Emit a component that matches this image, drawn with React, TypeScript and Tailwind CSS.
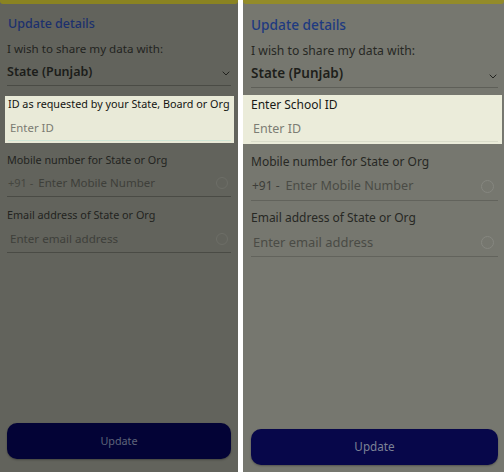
import React from 'react';

type PanelStyle = {
  panel: string;
  bar: string;
  title: string;
  share: string;
  stateRow: string;
  stateText: string;
  chevron: string;
  box: string;
  boxLabel: string;
  boxInput: string;
  label1: string;
  mobileRow: string;
  label2: string;
  emailRow: string;
  mobileText: string;
  emailText: string;
  prefix: string;
  circle: string;
  button: string;
};

const left: PanelStyle = {
  panel: 'w-[238px] bg-[#62635c] px-[7px] pb-[13px]',
  bar: 'h-[4px] -mx-[7px] bg-[#8a8322] rounded-b-[3px]',
  title: 'mt-[10px] pl-[1px] text-[12.5px] leading-[20px] font-medium text-[#1b306d]',
  share: 'mt-[7px] text-[11.6px] leading-[16px] text-[#22231f]',
  stateRow: 'mt-[5px] pb-[3px] border-b border-[#4a4b45]',
  stateText: 'text-[12.5px] leading-[20px] font-semibold text-[#1c1d1a]',
  chevron: 'mr-[1px] mt-[9px]',
  box: 'mt-[10px] -ml-[2px] -mr-[3px] px-[3px] pb-[2px] bg-[#e9ead8]',
  boxLabel: 'pt-[1px] text-[10.8px] leading-[14px] text-[#141512] whitespace-nowrap',
  boxInput: 'mt-[8px] pb-[3px] px-[2px] text-[11.4px] leading-[18px] text-[#7a7b72] border-b border-[#cfe6d6]',
  label1: 'mt-[9px] text-[10.8px] leading-[16px] text-[#22231f]',
  mobileRow: 'mt-[6px] pb-[4px] border-b border-[#4a4b45]',
  label2: 'mt-[10px] text-[10.8px] leading-[16px] text-[#22231f]',
  emailRow: 'mt-[7px] pb-[4px] border-b border-[#4a4b45]',
  mobileText: 'text-[11.5px] leading-[18px] text-[#3e3f3a]',
  emailText: 'pl-[3px] text-[11.6px] leading-[18px] text-[#3e3f3a]',
  prefix: 'pl-[1px] text-[11px] leading-[18px] text-[#45463f] mr-[5px]',
  circle: 'w-[12px] h-[12px] mr-[3px] rounded-full border border-[#6d6e67]',
  button: 'h-[36px] rounded-[10px] bg-[#030336] text-[10.8px] text-[#5e6479] shadow-[0_1px_2px_rgba(0,0,0,0.3)]',
};

const right: PanelStyle = {
  panel: 'w-[261px] bg-[#76776f] pl-[8px] pr-[6px] pb-[7px]',
  bar: 'h-[4px] -ml-[8px] -mr-[6px] bg-[#938b2a] rounded-b-[3px]',
  title: 'mt-[11px] text-[13.7px] leading-[20px] font-medium text-[#1e3a80]',
  share: 'mt-[8px] text-[12.2px] leading-[16px] text-[#272824]',
  stateRow: 'mt-[4px] pb-[4px] border-b border-[#5e5f58]',
  stateText: 'text-[13.5px] leading-[20px] font-semibold text-[#1e1f1b]',
  chevron: 'mr-[1px] mt-[11px]',
  box: 'mt-[7px] -ml-[8px] -mr-[4px] pl-[8px] pr-[4px] pb-[2px] bg-[#ebecda]',
  boxLabel: 'pt-[2px] text-[12px] leading-[16px] text-[#181915]',
  boxInput: 'mt-[6px] pb-[2px] px-[2px] text-[12.5px] leading-[20px] text-[#7c7d74] border-b border-[#dadcca]',
  label1: 'mt-[10px] text-[12px] leading-[16px] text-[#272824]',
  mobileRow: 'mt-[6px] pb-[4px] border-b border-[#62635c]',
  label2: 'mt-[9px] text-[12px] leading-[16px] text-[#272824]',
  emailRow: 'mt-[6px] pb-[4px] border-b border-[#62635c]',
  mobileText: 'text-[12.6px] leading-[20px] text-[#4a4b45]',
  emailText: 'pl-[2px] text-[12.9px] leading-[20px] text-[#4a4b45]',
  prefix: 'pl-[1px] text-[12px] leading-[20px] text-[#3d3e39] mr-[6px]',
  circle: 'w-[13px] h-[13px] mr-[4px] rounded-full border border-[#868780]',
  button: 'h-[36px] rounded-[10px] bg-[#07074a] text-[11.7px] text-[#7c8296] shadow-[0_1px_2px_rgba(0,0,0,0.3)]',
};

const Chevron = ({ className }: { className: string }) => (
  <svg width="8" height="5" viewBox="0 0 8 5" className={className}>
    <path d="M0.7 0.7L4 4L7.3 0.7" fill="none" stroke="#22231f" strokeWidth="1" />
  </svg>
);

const Panel = ({ s, idLabel }: { s: PanelStyle; idLabel: string }) => (
  <div className={`${s.panel} h-[472px] flex flex-col`}>
    <div className={s.bar} />
    <div className={s.title}>Update details</div>
    <div className={s.share}>I wish to share my data with:</div>
    <div className={`${s.stateRow} flex items-start justify-between`}>
      <span className={s.stateText}>State (Punjab)</span>
      <Chevron className={s.chevron} />
    </div>

    <div className={s.box}>
      <div className={s.boxLabel}>{idLabel}</div>
      <div className={s.boxInput}>Enter ID</div>
    </div>

    <div className={s.label1}>Mobile number for State or Org</div>
    <div className={`${s.mobileRow} flex items-center`}>
      <span className={s.prefix}>+91 -</span>
      <span className={`${s.mobileText} flex-1`}>Enter Mobile Number</span>
      <span className={s.circle} />
    </div>

    <div className={s.label2}>Email address of State or Org</div>
    <div className={`${s.emailRow} flex items-center`}>
      <span className={`${s.emailText} flex-1`}>Enter email address</span>
      <span className={s.circle} />
    </div>

    <button className={`${s.button} mt-auto w-full flex items-center justify-center`}>Update</button>
  </div>
);

export default function App() {
  return (
    <div
      className="w-[504px] h-[472px] flex bg-white overflow-hidden"
      style={{ fontFamily: '"Noto Sans", "Open Sans", sans-serif' }}
    >
      <Panel s={left} idLabel="ID as requested by your State, Board or Org" />
      <div className="w-[5px] bg-white" />
      <Panel s={right} idLabel="Enter School ID" />
    </div>
  );
}
